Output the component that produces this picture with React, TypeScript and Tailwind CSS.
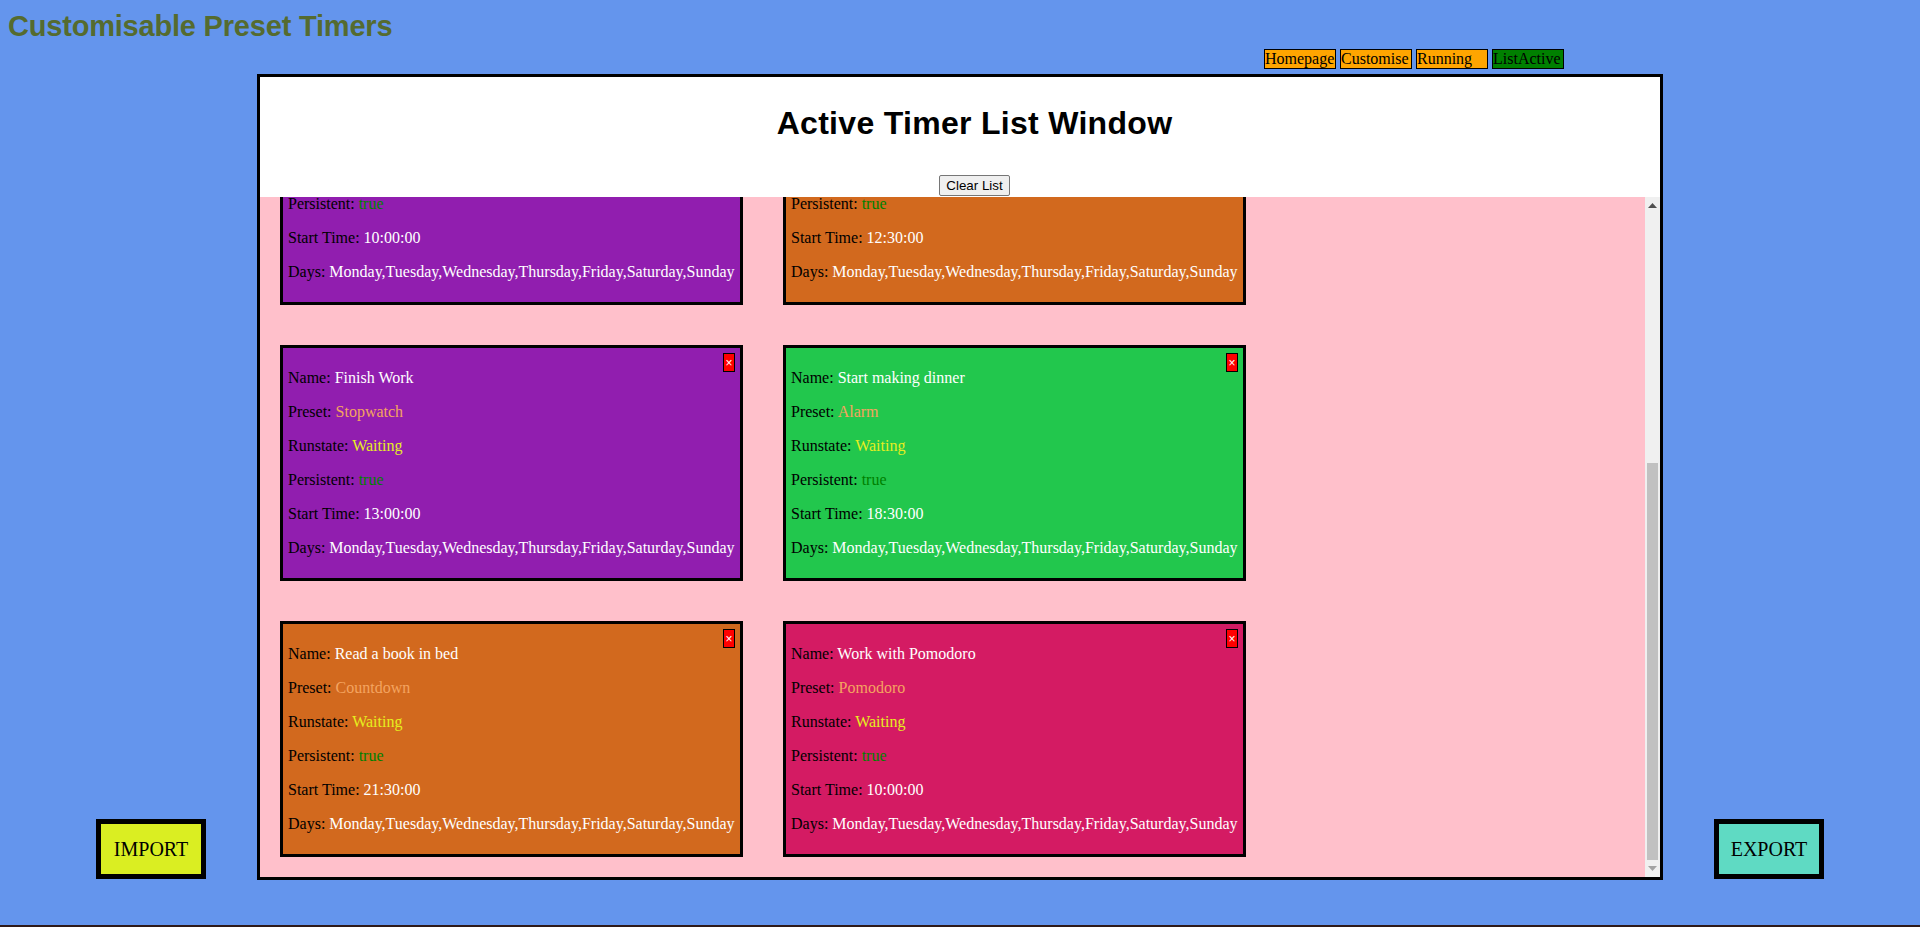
import { useLayoutEffect, useRef } from "react";

type Timer = {
  name: string;
  preset: string;
  start: string;
  bg: string;
};

const timers: Timer[] = [
  { name: "Wake up", preset: "Alarm", start: "07:00:00", bg: "bg-[#22C74D]" },
  { name: "Morning Pomodoro", preset: "Pomodoro", start: "08:30:00", bg: "bg-[#D41B63]" },
  { name: "Start Work", preset: "Stopwatch", start: "10:00:00", bg: "bg-[#911EAF]" },
  { name: "Lunch Break", preset: "Countdown", start: "12:30:00", bg: "bg-[#D2691E]" },
  { name: "Finish Work", preset: "Stopwatch", start: "13:00:00", bg: "bg-[#911EAF]" },
  { name: "Start making dinner", preset: "Alarm", start: "18:30:00", bg: "bg-[#22C74D]" },
  { name: "Read a book in bed", preset: "Countdown", start: "21:30:00", bg: "bg-[#D2691E]" },
  { name: "Work with Pomodoro", preset: "Pomodoro", start: "10:00:00", bg: "bg-[#D41B63]" },
];

const days = "Monday,Tuesday,Wednesday,Thursday,Friday,Saturday,Sunday";

const navItems = [
  { label: "Homepage", bg: "bg-[#FFA500]" },
  { label: "Customise", bg: "bg-[#FFA500]" },
  { label: "Running", bg: "bg-[#FFA500]" },
  { label: "ListActive", bg: "bg-[#008000]" },
];

const TimerCard = ({ timer }: { timer: Timer }) => (
  <div
    className={`w-[463px] border-[3px] border-black p-[5px] text-[16px] leading-[18px] whitespace-nowrap text-black ${timer.bg}`}
  >
    <button className="float-right w-[12px] h-[19px] p-0 bg-[#FF0000] border border-black text-white text-[12px] leading-none font-['Liberation_Sans',sans-serif]">
      ×
    </button>
    <p className="my-4">
      Name: <span className="text-white">{timer.name}</span>
    </p>
    <p className="my-4">
      Preset: <span className="text-[#F4A460]">{timer.preset}</span>
    </p>
    <p className="my-4">
      Runstate: <span className="text-[#E6EE1E]">Waiting</span>
    </p>
    <p className="my-4">
      Persistent: <span className="text-[#008000]">true</span>
    </p>
    <p className="my-4">
      Start Time: <span className="text-white">{timer.start}</span>
    </p>
    <p className="my-4">
      Days: <span className="text-white">{days}</span>
    </p>
  </div>
);

// classic windows-ish scrollbar, scrolled to the bottom
const ScrollBar = () => (
  <div className="w-[15px] shrink-0 bg-[#F0F0F0] flex flex-col">
    <div className="h-[17px] flex items-center justify-center">
      <svg width="9" height="5" viewBox="0 0 9 5">
        <polygon points="0,5 4.5,0 9,5" fill="#505050" />
      </svg>
    </div>
    <div className="flex-1" />
    <div className="h-[397px] mx-[2px] bg-[#C1C1C1]" />
    <div className="h-[17px] flex items-center justify-center">
      <svg width="9" height="5" viewBox="0 0 9 5">
        <polygon points="0,0 9,0 4.5,5" fill="#A3A3A3" />
      </svg>
    </div>
  </div>
);

export default function App() {
  const listRef = useRef<HTMLDivElement>(null);

  useLayoutEffect(() => {
    const el = listRef.current;
    if (el) {
      el.scrollTop = el.scrollHeight;
    }
  }, []);

  return (
    <div className="h-[927px] overflow-hidden bg-[#6495ED] font-['Liberation_Serif',serif]">
      <h1 className="pt-[10px] pl-[8px] text-[29px] leading-[33px] font-bold tracking-[-0.2px] text-[#556B2F] font-['Liberation_Sans',Arial,sans-serif]">
        Customisable Preset Timers
      </h1>

      <nav className="mt-[6px] flex gap-[4px] pl-[1264px]">
        {navItems.map((item) => (
          <div
            key={item.label}
            className={`w-[72px] h-[20px] border border-black text-[16px] leading-[18px] text-black ${item.bg}`}
          >
            {item.label}
          </div>
        ))}
      </nav>

      <div className="mt-[5px] flex items-end justify-center gap-[51px]">
        <button className="mb-[1px] w-[110px] h-[60px] border-[5px] border-black bg-[#DAEE22] text-[20px] text-black flex items-center justify-center">
          IMPORT
        </button>

        <div className="w-[1406px] h-[806px] border-[3px] border-black bg-white flex flex-col">
          <div className="h-[120px] shrink-0 pt-[28px] pl-[29px] flex flex-col items-center">
            <h2 className="text-[32px] leading-[37px] font-bold tracking-[0.3px] text-black font-['Liberation_Sans',Arial,sans-serif]">
              Active Timer List Window
            </h2>
            <button className="mt-[33px] h-[21px] px-[6px] bg-[#EFEFEF] border border-[#767676] rounded-[2px] text-[13.33px] leading-[17px] text-black font-['Liberation_Sans',Arial,sans-serif]">
              Clear List
            </button>
          </div>

          <div className="flex-1 min-h-0 flex bg-[#FFC0CB]">
            <div ref={listRef} className="flex-1 overflow-hidden">
              <div className="p-[20px] grid grid-cols-[463px_463px] gap-[40px]">
                {timers.map((timer) => (
                  <TimerCard key={timer.name} timer={timer} />
                ))}
              </div>
            </div>
            <ScrollBar />
          </div>
        </div>

        <button className="mb-[1px] w-[110px] h-[60px] border-[5px] border-black bg-[#5FDAC3] text-[20px] text-black flex items-center justify-center">
          EXPORT
        </button>
      </div>

      <div className="mt-[45px] h-[2px] bg-[#2E1A1A]" />
    </div>
  );
}
